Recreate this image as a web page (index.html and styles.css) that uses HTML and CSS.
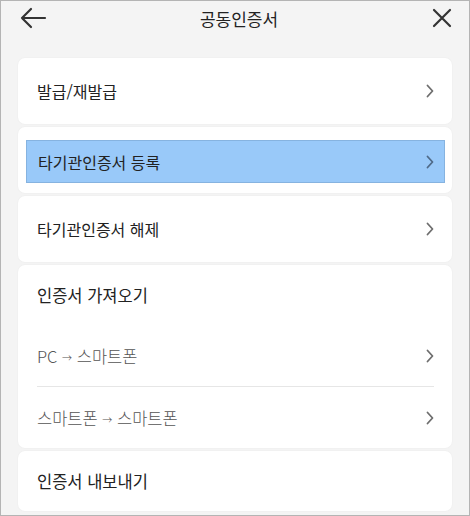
FILE: index.html
```html
<!DOCTYPE html>
<html lang="ko">
<head>
    <meta charset="UTF-8">
    <meta name="viewport" content="width=device-width, initial-scale=1.0">
    <title>공동인증서</title>
    <link rel="stylesheet" href="styles.css">
</head>
<body>
    <div class="screen">
        <div class="topbar">
            <svg class="icon-back" width="28" height="24" viewBox="0 0 28 24"><path d="M26 12H3M12 3L3 12l9 9" fill="none" stroke="#333" stroke-width="2.2" stroke-linecap="round" stroke-linejoin="round"/></svg>
            <div class="title">공동인증서</div>
            <svg class="icon-close" width="22" height="22" viewBox="0 0 22 22"><path d="M3 3l16 16M19 3L3 19" fill="none" stroke="#333" stroke-width="2.2" stroke-linecap="round"/></svg>
        </div>

        <div class="menu">
            <div class="card">
                <div class="row">
                    <span>발급/재발급</span>
                    <svg class="chev" width="8" height="14" viewBox="0 0 8 14"><path d="M1.5 1.5L6.5 7l-5 5.5" fill="none" stroke="#6e6e6e" stroke-width="1.8" stroke-linecap="round" stroke-linejoin="round"/></svg>
                </div>
            </div>
            <div class="card card-picked">
                <div class="row picked">
                    <span>타기관인증서 등록</span>
                    <svg class="chev" width="8" height="14" viewBox="0 0 8 14"><path d="M1.5 1.5L6.5 7l-5 5.5" fill="none" stroke="#4f6a88" stroke-width="1.8" stroke-linecap="round" stroke-linejoin="round"/></svg>
                </div>
            </div>
            <div class="card">
                <div class="row">
                    <span>타기관인증서 해제</span>
                    <svg class="chev" width="8" height="14" viewBox="0 0 8 14"><path d="M1.5 1.5L6.5 7l-5 5.5" fill="none" stroke="#6e6e6e" stroke-width="1.8" stroke-linecap="round" stroke-linejoin="round"/></svg>
                </div>
            </div>
            <div class="card">
                <div class="group-title">인증서 가져오기</div>
                <div class="row sub">
                    <span>PC <i class="arr">→</i> 스마트폰</span>
                    <svg class="chev" width="8" height="14" viewBox="0 0 8 14"><path d="M1.5 1.5L6.5 7l-5 5.5" fill="none" stroke="#6e6e6e" stroke-width="1.8" stroke-linecap="round" stroke-linejoin="round"/></svg>
                </div>
                <div class="divider"></div>
                <div class="row sub">
                    <span>스마트폰 <i class="arr">→</i> 스마트폰</span>
                    <svg class="chev" width="8" height="14" viewBox="0 0 8 14"><path d="M1.5 1.5L6.5 7l-5 5.5" fill="none" stroke="#6e6e6e" stroke-width="1.8" stroke-linecap="round" stroke-linejoin="round"/></svg>
                </div>
            </div>
            <div class="card">
                <div class="group-title">인증서 내보내기</div>
            </div>
        </div>
    </div>
</body>
</html>
```

FILE: styles.css
```css
body { margin: 0; padding: 0; font-family: "Noto Sans CJK KR", "Noto Sans", sans-serif; color: #222; }
.screen { width: 470px; height: 516px; box-sizing: border-box; border: 1px solid #b4b4b4; background-color: #f4f4f4; overflow: hidden; }
.topbar { display: flex; align-items: center; justify-content: space-between; height: 34px; padding: 0 16px 0 18px; }
.title { font-size: 17px; color: #222; }
.menu { display: flex; flex-direction: column; gap: 3px; margin: 23px 17px 0; }
.card { background-color: #fff; border-radius: 7px; box-shadow: 0 0 2px rgba(0,0,0,0.05); }
.row { display: flex; align-items: center; justify-content: space-between; height: 66px; padding: 0 18px 0 19px; font-size: 16px; }
.card-picked { padding: 13px 7px 10px 8px; }
.row.picked { height: 41px; padding: 0 10px 0 11px; background-color: #99c9f9; border: 1px solid #86b3e0; }
.group-title { height: 60px; line-height: 60px; padding-left: 19px; font-size: 16.5px; }
.row.sub { height: 61px; color: #555; font-weight: 300; font-size: 16.5px; }
.arr { font-style: normal; font-size: 10px; position: relative; top: -1px; }
.divider { height: 1px; background-color: #e6e6e6; margin: 0 18px 0 19px; }
```
